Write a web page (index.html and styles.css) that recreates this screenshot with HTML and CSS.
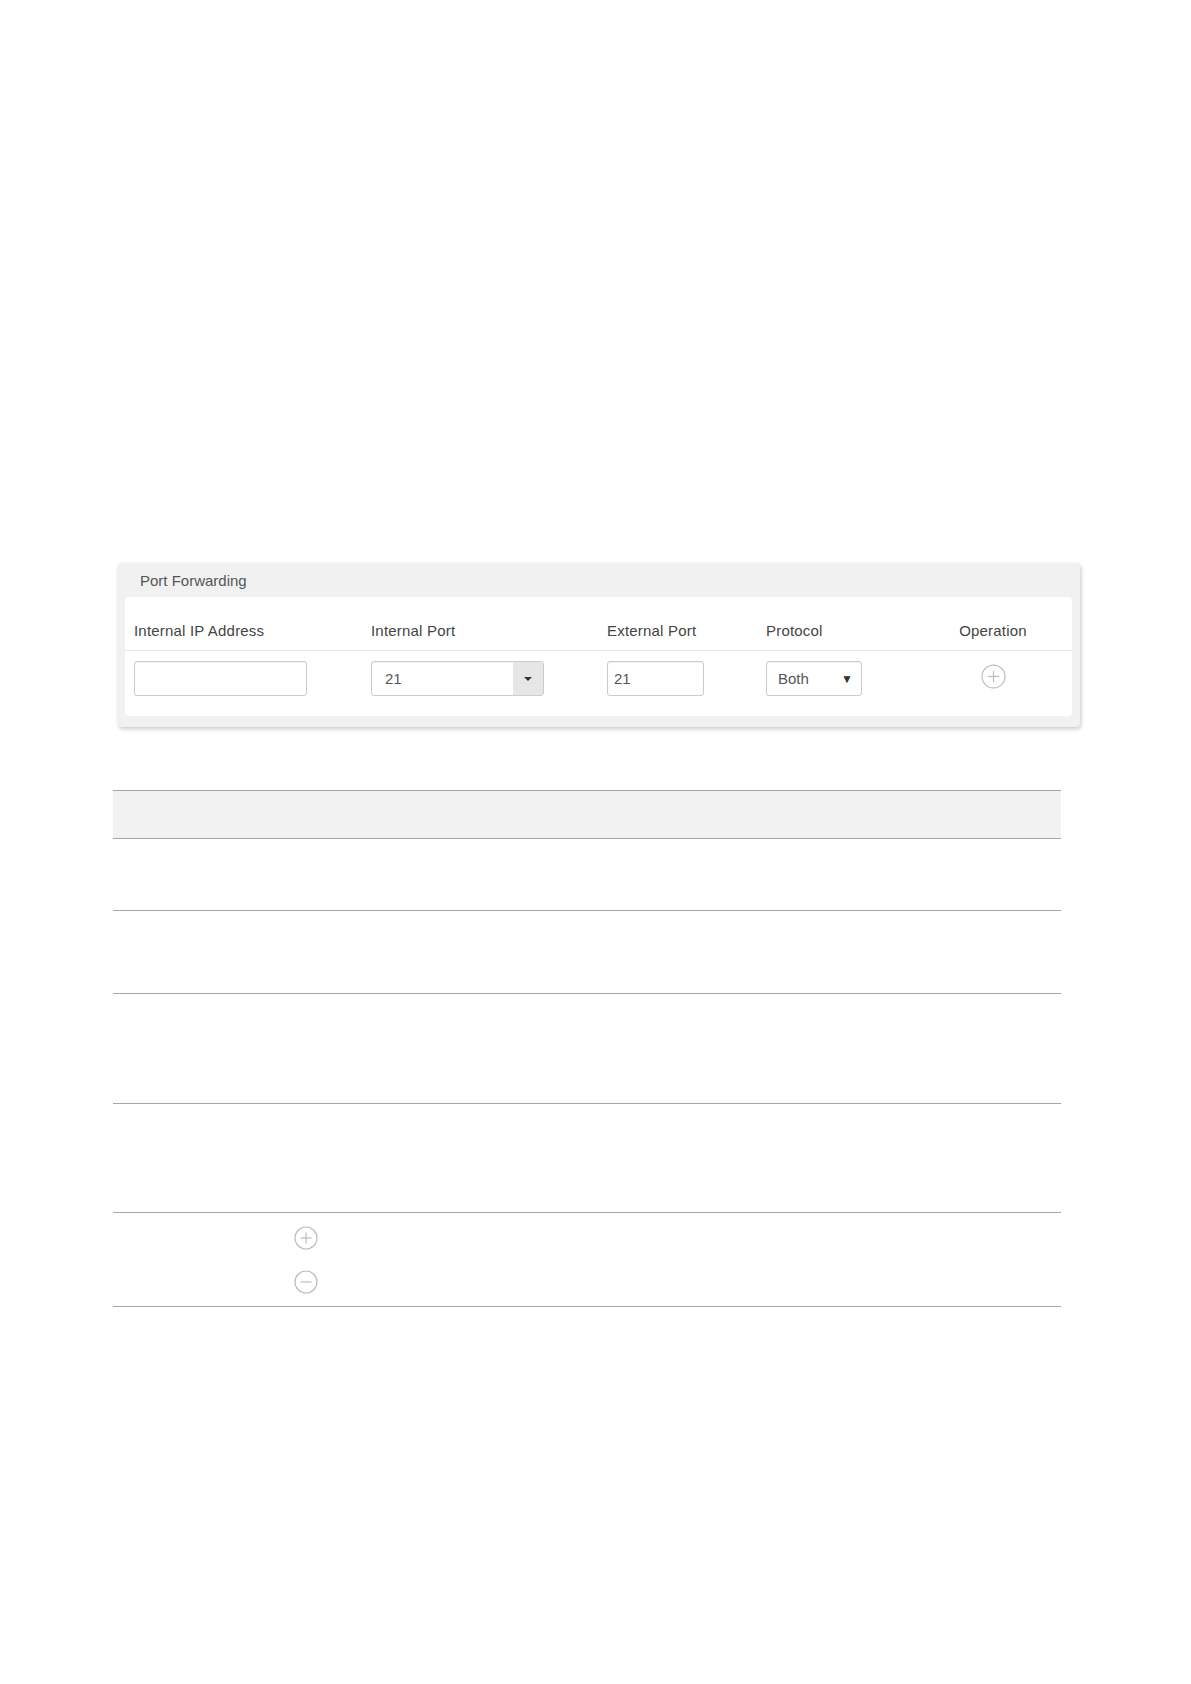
FILE: index.html
```html
<!DOCTYPE html>
<html lang="en">
	<head>
	<meta charset="UTF-8" />
	<meta name="viewport" content="width=device-width, initial-scale=1.0" />
	<title>Port Forwarding</title>
	<link rel="stylesheet" href="styles.css">
	</head>
	<body>
		<div class="page">
			<div class="panel">
				<div class="panel-title">Port Forwarding</div>
				<div class="card">
					<div class="grid head">
						<div>Internal IP Address</div>
						<div>Internal Port</div>
						<div>External Port</div>
						<div>Protocol</div>
						<div class="center">Operation</div>
					</div>
					<div class="grid body">
						<div><div class="field ip"></div></div>
						<div>
							<div class="field combo">
								<span class="value">21</span>
								<span class="combo-btn"><span class="caret"></span></span>
							</div>
						</div>
						<div><div class="field ext">21</div></div>
						<div>
							<div class="field proto">
								<span>Both</span>
								<span class="tri">&#9660;</span>
							</div>
						</div>
						<div class="center">
							<svg class="icon op" viewBox="0 0 24 24">
								<circle cx="12" cy="12" r="11" />
								<line x1="12" y1="6.5" x2="12" y2="17.5" />
								<line x1="6.5" y1="12" x2="17.5" y2="12" />
							</svg>
						</div>
					</div>
				</div>
			</div>

			<div class="table">
				<div class="row th"></div>
				<div class="row r1"></div>
				<div class="row r2"></div>
				<div class="row r3"></div>
				<div class="row r4"></div>
				<div class="row r5">
					<div class="cell-a"></div>
					<div class="cell-b">
						<svg class="icon" viewBox="0 0 24 24">
							<circle cx="12" cy="12" r="11" />
							<line x1="12" y1="6.5" x2="12" y2="17.5" />
							<line x1="6.5" y1="12" x2="17.5" y2="12" />
						</svg>
						<svg class="icon" viewBox="0 0 24 24">
							<circle cx="12" cy="12" r="11" />
							<line x1="6.5" y1="12" x2="17.5" y2="12" />
						</svg>
					</div>
				</div>
			</div>
		</div>
	</body>
</html>
```

FILE: styles.css
```css
* {
	padding: 0;
	margin: 0;
	box-sizing: border-box;
}

body {
	background: #fff;
	font-family: 'Liberation Sans', Arial, sans-serif;
	font-size: 15px;
	line-height: 20px;
	color: #444;
}

.page {
	padding: 563px 0 0 113px;
	min-height: 1684px;
}

.panel {
	margin-left: 5px;
	width: 962px;
	background: #f1f1f1;
	border-radius: 4px;
	box-shadow: 1px 2px 4px rgba(0, 0, 0, 0.22);
	padding: 0 8px 11px 7px;
}

.panel-title {
	padding: 8px 15px 6px;
	color: #555;
}

.card {
	background: #fff;
	border-radius: 4px;
}

.grid {
	display: grid;
	grid-template-columns: 237px 236px 159px 156px 1fr;
	padding: 0 8px 0 9px;
}

.center {
	text-align: center;
}

.head {
	padding-top: 24px;
	padding-bottom: 9px;
	border-bottom: 1px solid #e6e6e6;
	color: #444;
	letter-spacing: 0.2px;
}

.body {
	padding-top: 10px;
	padding-bottom: 20px;
}

.field {
	height: 35px;
	border: 1px solid #ccc;
	border-radius: 3px;
	box-shadow: inset 0 1px 1px rgba(0, 0, 0, 0.06);
	color: #555;
	display: flex;
	align-items: center;
}

.ip {
	width: 173px;
}

.combo {
	width: 173px;
	overflow: hidden;
}

.combo .value {
	flex: 1;
	padding-left: 13px;
}

.combo-btn {
	width: 30px;
	height: 100%;
	background: #e6e6e6;
	display: flex;
	align-items: center;
	justify-content: center;
}

.caret {
	width: 0;
	height: 0;
	border-left: 4px solid transparent;
	border-right: 4px solid transparent;
	border-top: 4px solid #333;
}

.ext {
	width: 97px;
	padding-left: 6px;
}

.proto {
	width: 96px;
	padding: 0 8px 0 11px;
	justify-content: space-between;
}

.proto .tri {
	font-size: 12px;
	color: #333;
}

.icon {
	width: 24px;
	height: 24px;
	fill: none;
	stroke: #bdbdbd;
	stroke-width: 1.2;
}

.op {
	width: 25px;
	height: 25px;
	margin-top: 3px;
}

.table {
	margin-top: 63px;
	width: 948px;
	border-top: 1px solid #a6a6a6;
}

.row {
	border-bottom: 1px solid #a6a6a6;
}

.th {
	height: 48px;
	background: #f2f2f2;
}

.r1 {
	height: 72px;
}

.r2 {
	height: 83px;
}

.r3 {
	height: 110px;
}

.r4 {
	height: 109px;
}

.r5 {
	display: flex;
}

.cell-a {
	width: 181px;
}

.cell-b {
	display: flex;
	flex-direction: column;
	gap: 20px;
	padding: 13px 0 12px;
}
```
